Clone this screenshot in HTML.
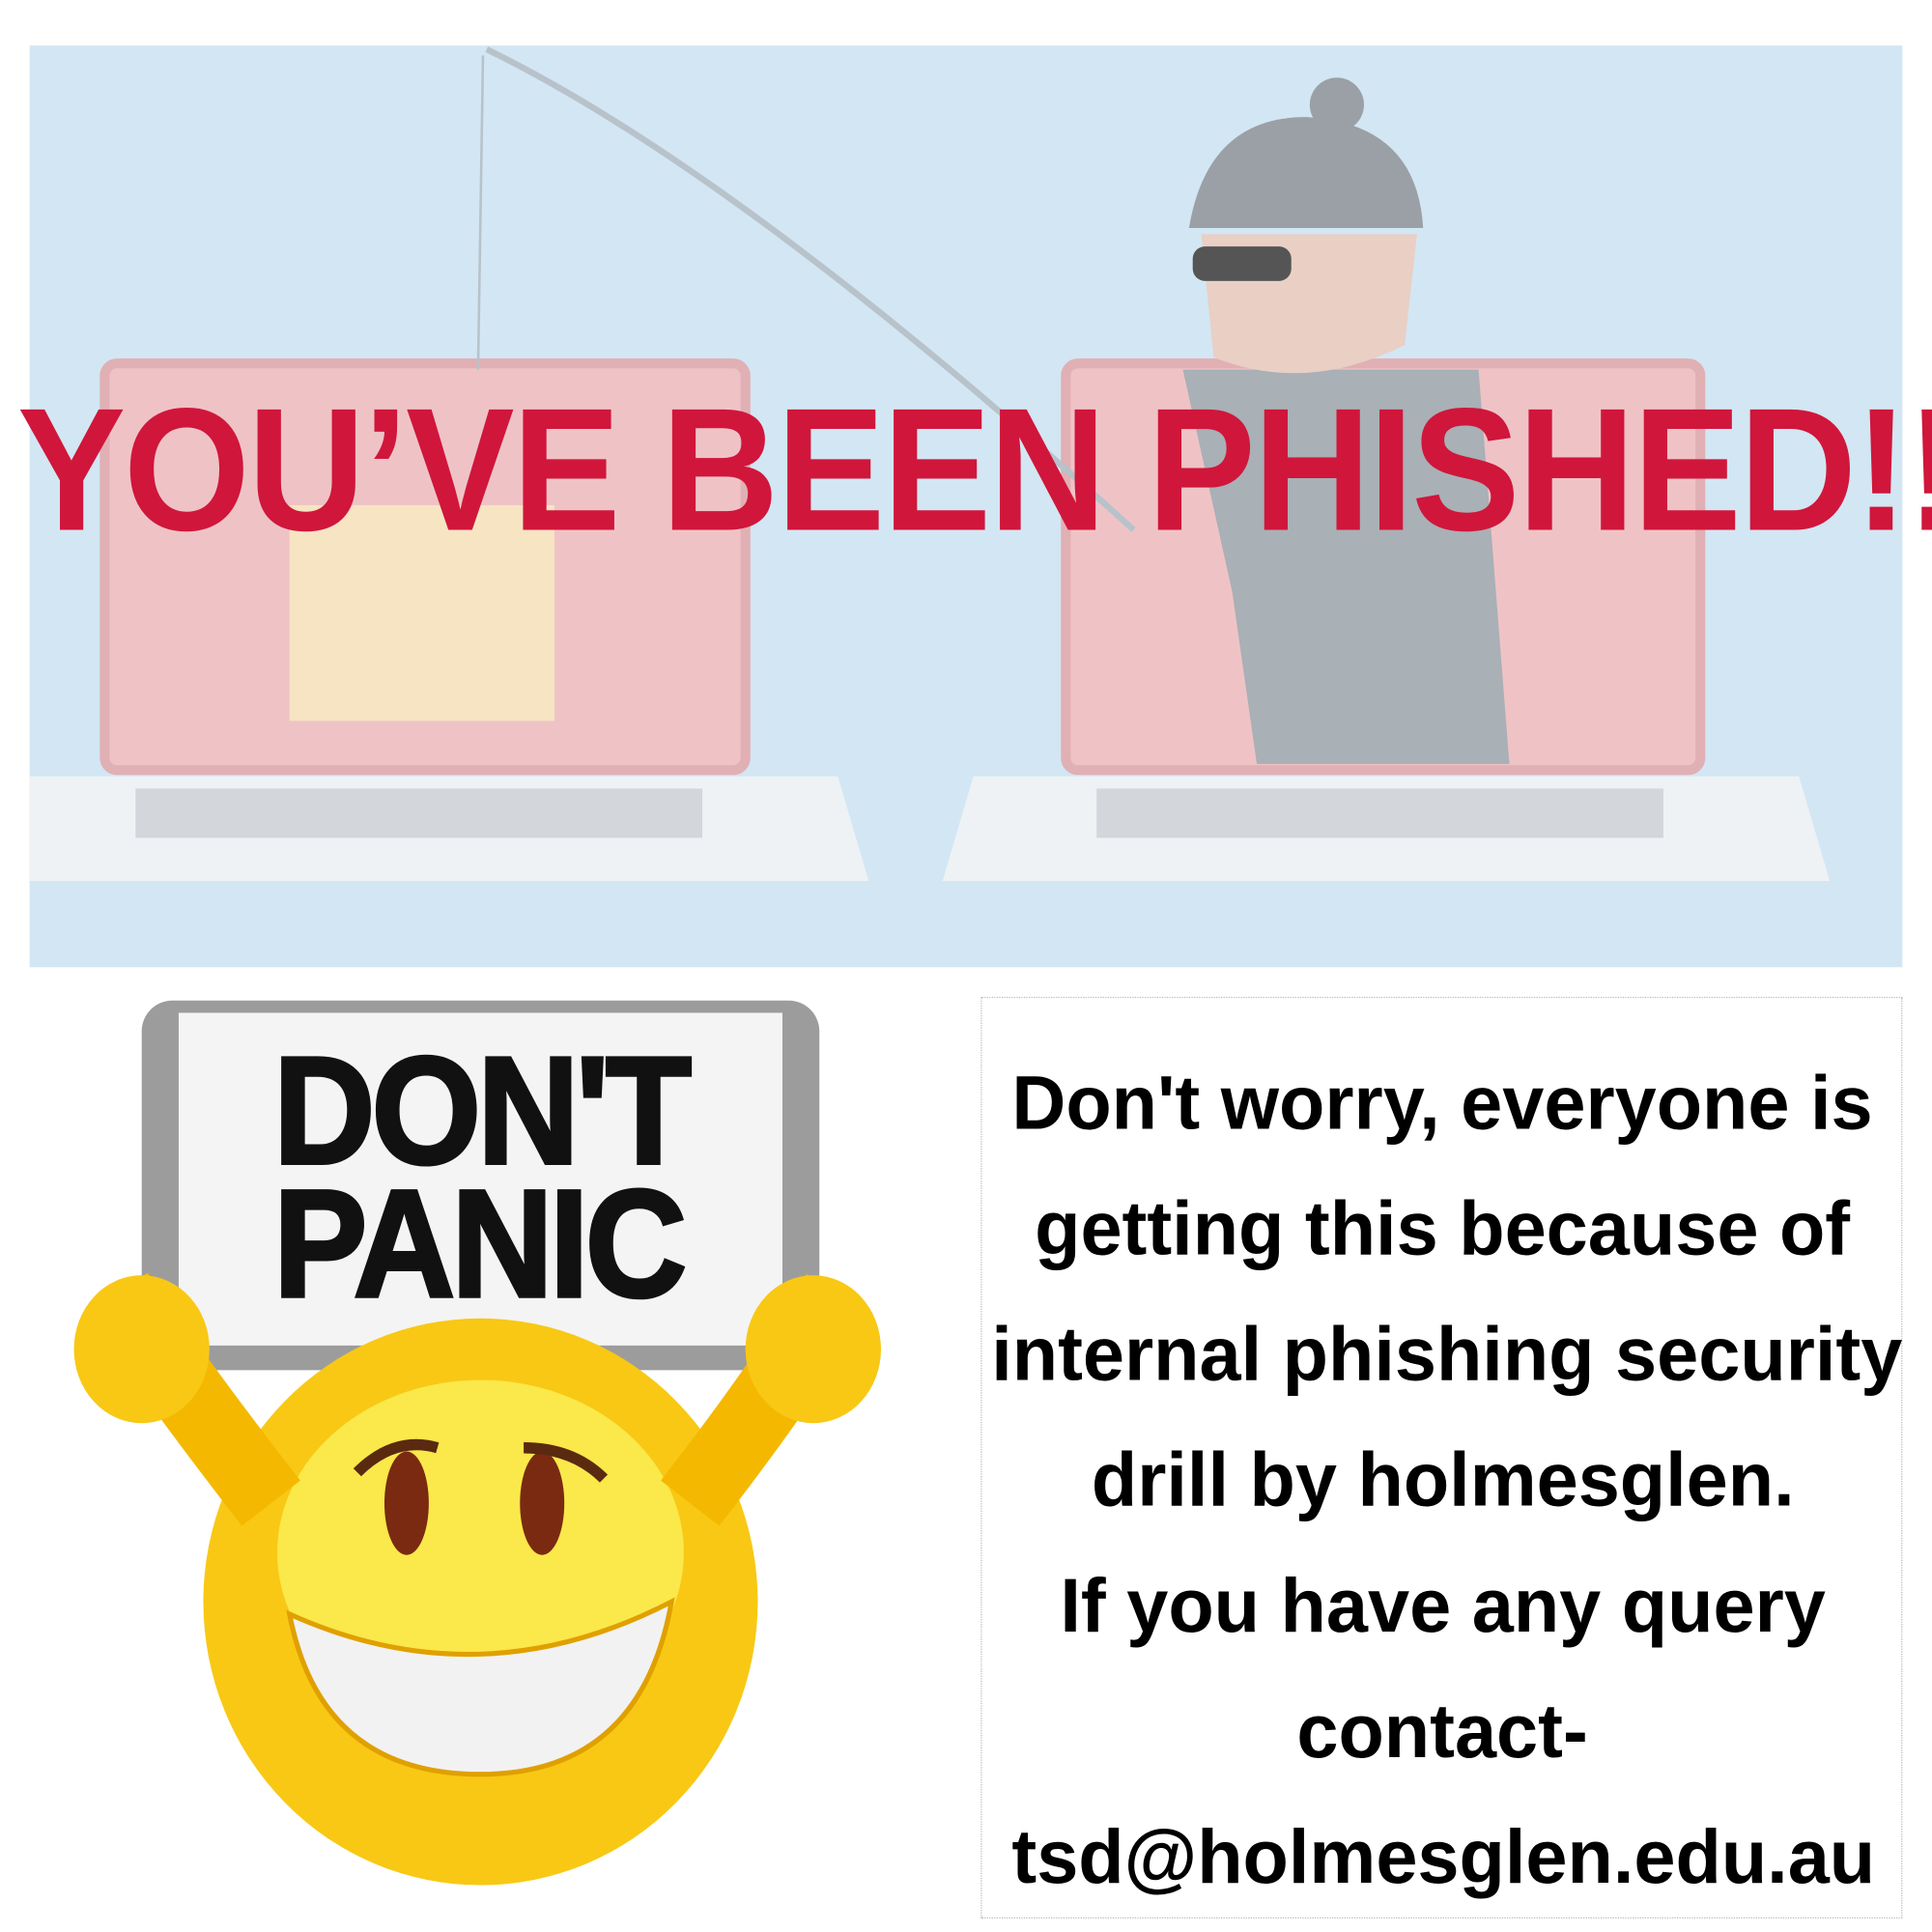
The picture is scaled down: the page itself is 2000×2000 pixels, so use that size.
<!DOCTYPE html>
<html><head><meta charset="utf-8"><style>
html,body{margin:0;padding:0;background:#fff;width:2000px;height:2000px;overflow:hidden}
#w{position:absolute;left:0;top:0;width:1568px;height:1568px;transform:scale(1.27551);transform-origin:0 0}
.ab{position:absolute}
.title{position:absolute;left:14px;top:300px;font:bold 142px "Liberation Sans",sans-serif;color:#d0163b;white-space:nowrap;transform:scaleX(0.93);transform-origin:0 0;letter-spacing:-2px}
.box{position:absolute;left:796px;top:809px;width:746px;height:746px;border:1px dotted #bbb}
.ln{position:absolute;left:0;width:748px;text-align:center;font:bold 62px "Liberation Sans Narrow","Liberation Sans",sans-serif;color:#000;white-space:nowrap}
.ln span{display:inline-block;transform:scaleX(0.98)}
</style></head><body><div id="w">
<svg class="ab" style="left:0;top:0" width="1568" height="1568">
<rect x="24" y="37" width="1520" height="748" fill="#d3e6f3"/>
<rect x="85" y="295" width="520" height="330" rx="10" fill="#efc3c6" stroke="#e0b0b4" stroke-width="8"/>
<rect x="235" y="410" width="215" height="175" fill="#f6e4c2"/>
<path d="M24 630 L680 630 L705 715 L24 715 Z" fill="#eef2f5"/>
<rect x="110" y="640" width="460" height="40" fill="#c8ccd0" opacity="0.7"/>
<rect x="865" y="295" width="515" height="330" rx="10" fill="#efc3c6" stroke="#e0b0b4" stroke-width="8"/>
<path d="M960 300 L1200 300 L1225 620 L1020 620 L1000 480 Z" fill="#a9b0b6"/>
<path d="M790 630 L1460 630 L1485 715 L765 715 Z" fill="#eef2f5"/>
<rect x="890" y="640" width="460" height="40" fill="#c8ccd0" opacity="0.7"/>
<circle cx="1085" cy="85" r="22" fill="#9aa0a6"/>
<path d="M965 185 Q980 95 1060 95 Q1150 100 1155 185 Z" fill="#9aa0a6"/>
<path d="M975 190 L1150 190 L1140 280 Q1060 320 985 290 Z" fill="#e9cfc4"/>
<rect x="968" y="200" width="80" height="28" rx="10" fill="#555"/>
<path d="M395 40 Q600 140 920 430" stroke="#b8c2ca" stroke-width="5" fill="none"/>
<line x1="392" y1="45" x2="388" y2="300" stroke="#b8c2ca" stroke-width="2"/>
<rect x="115" y="812" width="550" height="300" rx="25" fill="#9c9c9c"/>
<rect x="145" y="822" width="490" height="270" fill="#f4f4f4"/>
<ellipse cx="390" cy="1300" rx="225" ry="230" fill="#f8c815"/>
<ellipse cx="390" cy="1260" rx="165" ry="140" fill="#fbe84a"/>
<path d="M95 1050 Q150 1130 220 1220" stroke="#f5b800" stroke-width="60" fill="none"/>
<path d="M680 1050 Q630 1130 560 1220" stroke="#f5b800" stroke-width="60" fill="none"/>
<ellipse cx="115" cy="1095" rx="55" ry="60" fill="#f8c815"/>
<ellipse cx="660" cy="1095" rx="55" ry="60" fill="#f8c815"/>
<path d="M235 1310 Q390 1380 545 1300 Q520 1440 390 1440 Q260 1440 235 1310 Z" fill="#f2f2f2" stroke="#e0a000" stroke-width="4"/>
<ellipse cx="330" cy="1220" rx="18" ry="42" fill="#7a2a10"/>
<ellipse cx="440" cy="1220" rx="18" ry="42" fill="#7a2a10"/>
<path d="M290 1195 Q320 1165 355 1175" stroke="#5a2a10" stroke-width="9" fill="none"/>
<path d="M425 1175 Q465 1175 490 1200" stroke="#5a2a10" stroke-width="9" fill="none"/>
</svg>
<div class="ab" style="left:222px;top:848px;font:900 124px/108px 'Liberation Sans',sans-serif;color:#111;transform:scaleX(0.92);transform-origin:0 0;letter-spacing:-3px;-webkit-text-stroke:3px #111">DON'T<br>PANIC</div>
<div class="title">YOU’VE BEEN PHISHED!!</div>
<div class="box">
<div class="ln" style="top:50px"><span>Don't worry, everyone is</span></div>
<div class="ln" style="top:152px"><span>getting this because of</span></div>
<div class="ln" style="top:254px"><span>internal phishing security</span></div>
<div class="ln" style="top:356px"><span>drill by holmesglen.</span></div>
<div class="ln" style="top:458px"><span>If you have any query</span></div>
<div class="ln" style="top:560px"><span>contact-</span></div>
<div class="ln" style="top:662px"><span>tsd@holmesglen.edu.au</span></div>
</div>
</div></body></html>
